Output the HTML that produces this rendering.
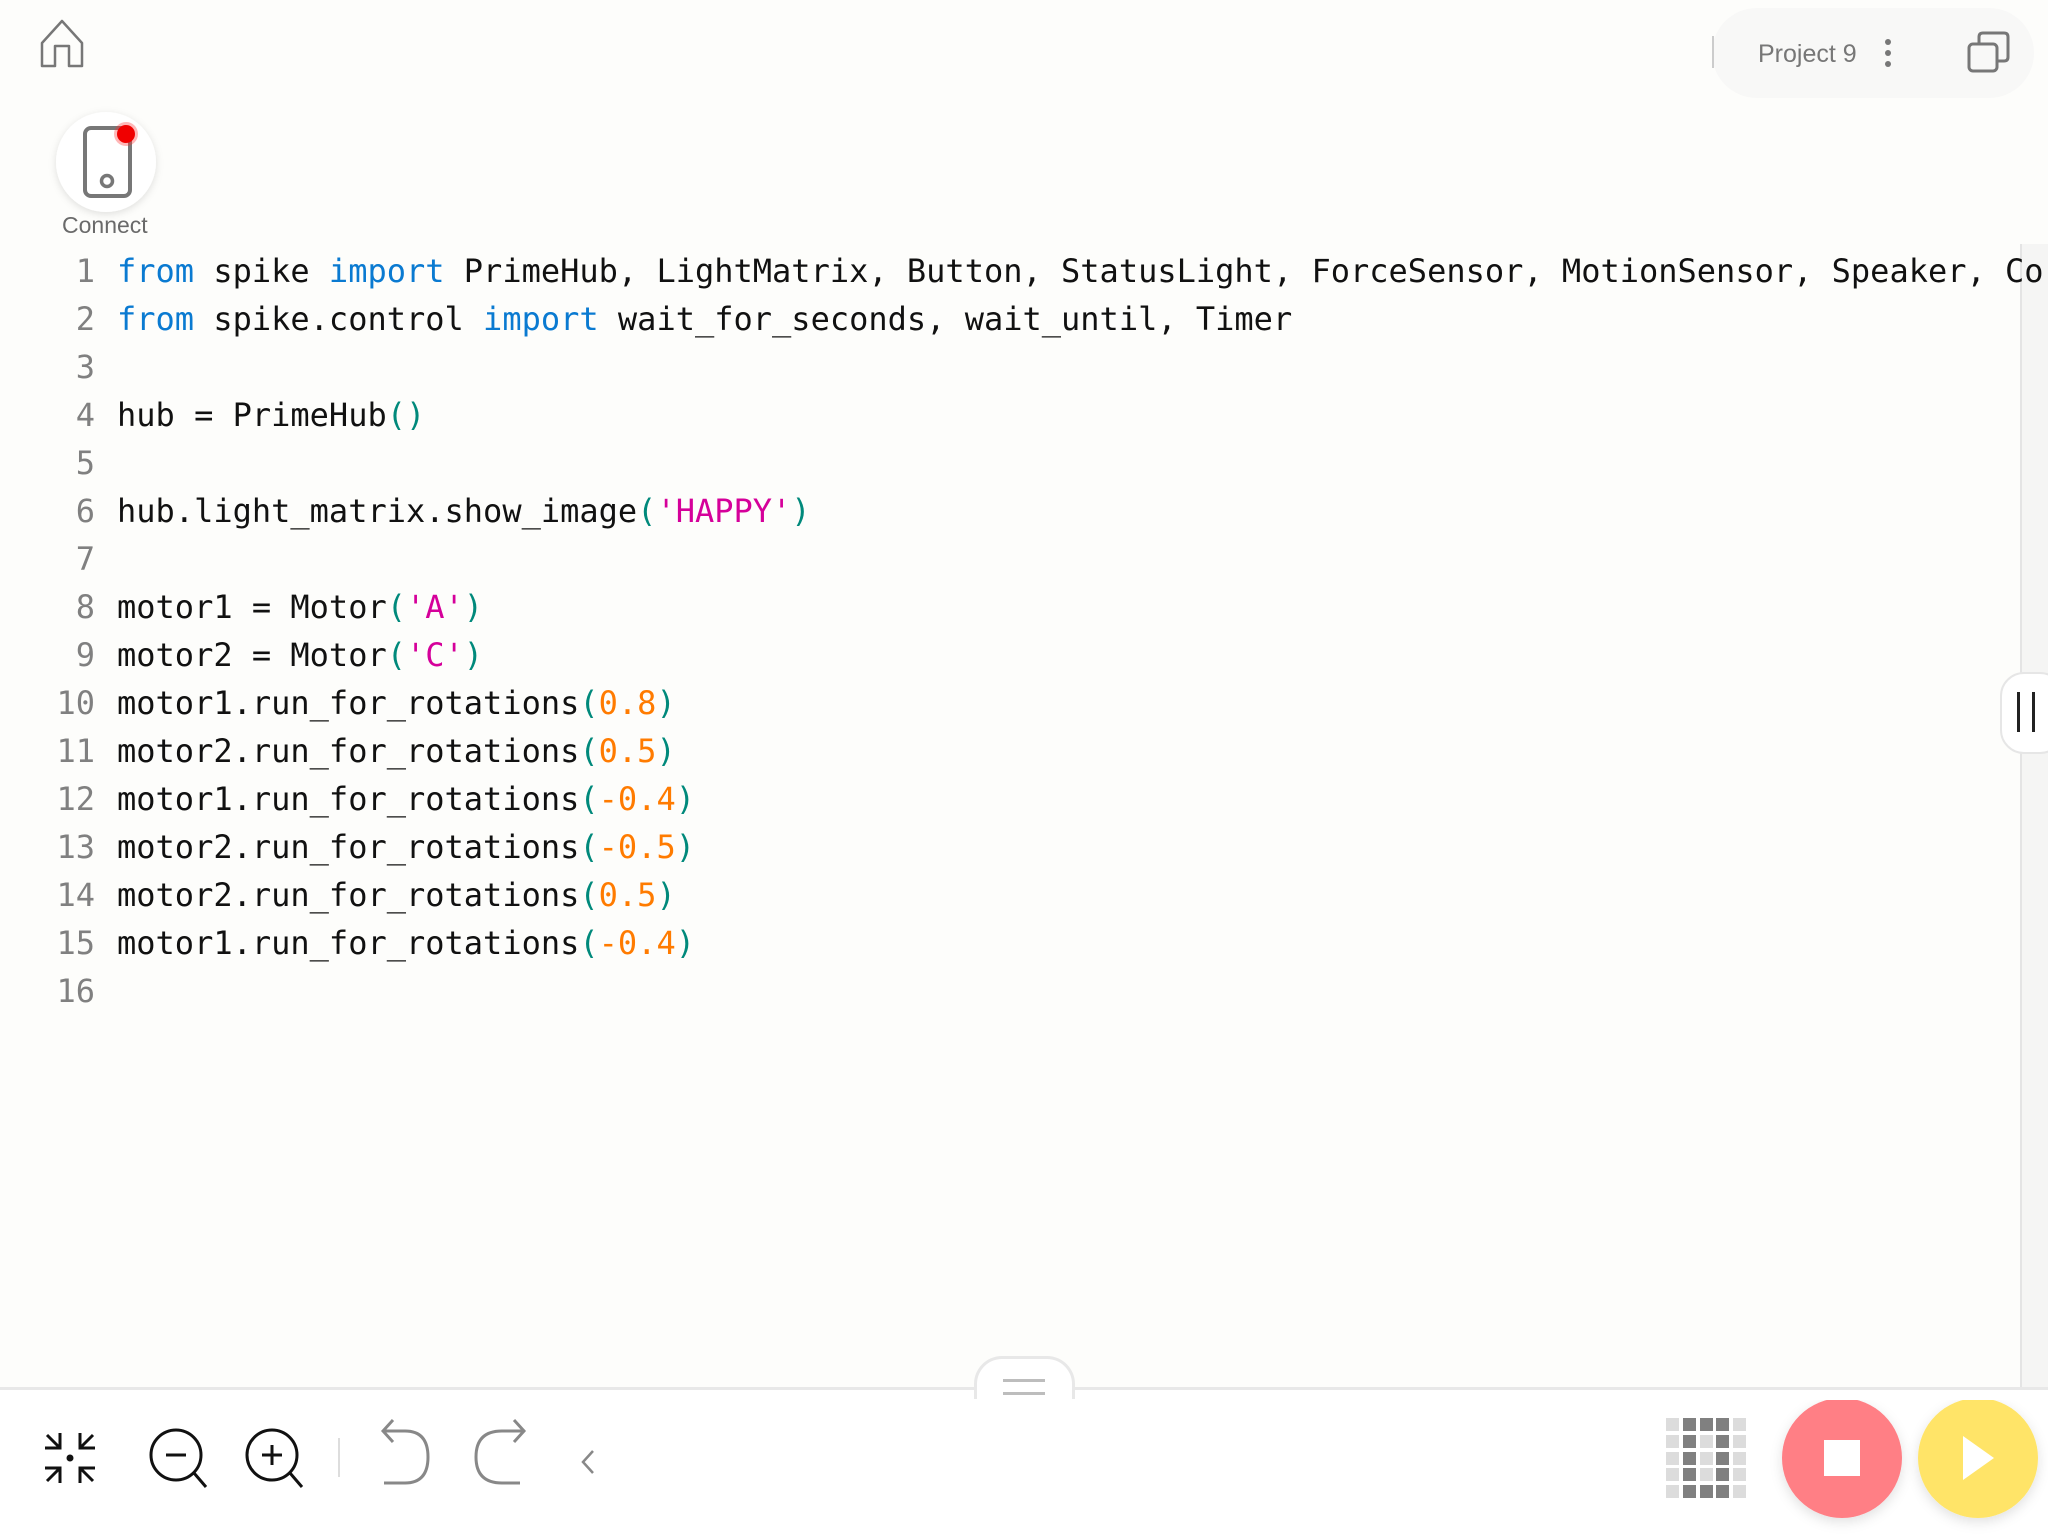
<!DOCTYPE html>
<html><head><meta charset="utf-8"><style>
html,body{margin:0;padding:0}
body{width:2048px;height:1536px;position:relative;overflow:hidden;background:#fdfdfb;font-family:"Liberation Sans",sans-serif}
.rp{position:absolute;left:2020px;top:244px;width:28px;height:1145px;background:#f5f5f4;border-left:2px solid #e4e4e4}
.code{position:absolute;left:0;top:247px;font-family:"DejaVu Sans Mono","Liberation Mono",monospace;font-size:32px;line-height:48px;white-space:pre;color:#111}
.ln{display:inline-block;width:95px;text-align:right;color:#808080;margin-right:22px}
.k{color:#0a7ad1}.s{color:#d5009a}.p{color:#00897b}.n{color:#ff7b00}
.bottom{position:absolute;left:0;top:1387px;width:2048px;height:149px;background:#fff;border-top:3px solid #e8e8e8}
</style></head><body>
<div class="rp"></div>
<div style="position:absolute;left:2000px;top:672px;width:60px;height:78px;background:#fff;border:2px solid #e6e6e6;border-radius:24px"></div>
<div style="position:absolute;left:2017px;top:692px;width:3px;height:40px;background:#222"></div>
<div style="position:absolute;left:2032px;top:692px;width:3px;height:40px;background:#222"></div>

<svg style="position:absolute;left:0;top:0" width="2048" height="300">
<path d="M42 66 V43 L62 21 L82 43 V66 H69 V46 H55 V66 Z" fill="none" stroke="#777" stroke-width="2.5" stroke-linejoin="round"/>
<defs><filter id="sh" x="-30%" y="-30%" width="160%" height="160%"><feDropShadow dx="0" dy="2" stdDeviation="4" flood-color="#000" flood-opacity="0.12"/></filter></defs>
<circle cx="106" cy="162" r="50" fill="#fff" filter="url(#sh)"/>
<rect x="85" y="128" width="45" height="68" rx="6" fill="none" stroke="#777" stroke-width="4"/>
<circle cx="107" cy="181" r="5.5" fill="none" stroke="#777" stroke-width="3.5"/>
<circle cx="126" cy="134" r="12" fill="#ff3030" opacity="0.35"/>
<circle cx="126" cy="134" r="9" fill="#f00000"/>
<rect x="1712" y="8" width="322" height="90" rx="45" fill="#f8f8f7"/>
<line x1="1713" y1="36" x2="1713" y2="68" stroke="#ccc" stroke-width="2"/>
<circle cx="1888" cy="42" r="3" fill="#777"/><circle cx="1888" cy="53" r="3" fill="#777"/><circle cx="1888" cy="64" r="3" fill="#777"/>
<rect x="1969" y="44" width="28" height="27" rx="4" fill="none" stroke="#777" stroke-width="3"/>
<path d="M1979 44 V37 Q1979 33 1983 33 H2004 Q2008 33 2008 37 V57 Q2008 61 2004 61 H1997" fill="none" stroke="#777" stroke-width="3"/>
</svg>
<div style="position:absolute;left:1758px;top:40px;font-size:25px;color:#777">Project 9</div>
<div style="position:absolute;left:62px;top:212px;font-size:23px;color:#6a6a6a">Connect</div>

<div class="code"><span class="ln">1</span><span class="k">from</span> spike <span class="k">import</span> PrimeHub, LightMatrix, Button, StatusLight, ForceSensor, MotionSensor, Speaker, Co
<span class="ln">2</span><span class="k">from</span> spike.control <span class="k">import</span> wait_for_seconds, wait_until, Timer
<span class="ln">3</span>
<span class="ln">4</span>hub = PrimeHub<span class="p">()</span>
<span class="ln">5</span>
<span class="ln">6</span>hub.light_matrix.show_image<span class="p">(</span><span class="s">'HAPPY'</span><span class="p">)</span>
<span class="ln">7</span>
<span class="ln">8</span>motor1 = Motor<span class="p">(</span><span class="s">'A'</span><span class="p">)</span>
<span class="ln">9</span>motor2 = Motor<span class="p">(</span><span class="s">'C'</span><span class="p">)</span>
<span class="ln">10</span>motor1.run_for_rotations<span class="p">(</span><span class="n">0.8</span><span class="p">)</span>
<span class="ln">11</span>motor2.run_for_rotations<span class="p">(</span><span class="n">0.5</span><span class="p">)</span>
<span class="ln">12</span>motor1.run_for_rotations<span class="p">(</span><span class="n">-0.4</span><span class="p">)</span>
<span class="ln">13</span>motor2.run_for_rotations<span class="p">(</span><span class="n">-0.5</span><span class="p">)</span>
<span class="ln">14</span>motor2.run_for_rotations<span class="p">(</span><span class="n">0.5</span><span class="p">)</span>
<span class="ln">15</span>motor1.run_for_rotations<span class="p">(</span><span class="n">-0.4</span><span class="p">)</span>
<span class="ln">16</span></div>

<div class="bottom"></div>
<div style="position:absolute;left:974px;top:1356px;width:95px;height:40px;background:#fff;border:3px solid #e8e8e8;border-bottom:none;border-radius:28px 28px 0 0"></div>
<div style="position:absolute;left:1003px;top:1379px;width:42px;height:3px;background:#bdbdbd"></div>
<div style="position:absolute;left:1003px;top:1392px;width:42px;height:3px;background:#bdbdbd"></div>

<svg style="position:absolute;left:0;top:1400px" width="2048" height="136">
<g stroke="#111" stroke-width="3" fill="none">
<path d="M45 48 H60 V33 M47 35 L60 48"/>
<path d="M95 48 H80 V33 M93 35 L80 48"/>
<path d="M45 68 H60 V83 M47 81 L60 68"/>
<path d="M95 68 H80 V83 M93 81 L80 68"/>
<ellipse cx="176" cy="55" rx="25" ry="25"/>
<path d="M194 73 L206 87 M166 55 H186"/>
<ellipse cx="272" cy="55" rx="25" ry="25"/>
<path d="M290 73 L302 87 M262 55 H282 M272 45 V65"/>
</g>
<circle cx="70" cy="58" r="3.5" fill="#111"/>
<line x1="339" y1="38" x2="339" y2="77" stroke="#ddd" stroke-width="2"/>
<g stroke="#888" stroke-width="3" fill="none">
<path d="M393 20 L383 31 L393 42 M383 31 H405 Q428 31 428 57 Q428 83 405 83 H384"/>
<path d="M514 20 L524 31 L514 42 M524 31 H502 Q476 31 476 57 Q476 83 502 83 H520"/>
<path d="M593 51 L583 62 L593 73" stroke-width="2.5"/>
</g>
<g>
<rect x="1666" y="18" width="13" height="13" fill="#dcdcdc"/><rect x="1683" y="18" width="13" height="13" fill="#808080"/><rect x="1700" y="18" width="13" height="13" fill="#808080"/><rect x="1716" y="18" width="13" height="13" fill="#808080"/><rect x="1733" y="18" width="13" height="13" fill="#dcdcdc"/>
<rect x="1666" y="35" width="13" height="13" fill="#dcdcdc"/><rect x="1683" y="35" width="13" height="13" fill="#808080"/><rect x="1700" y="35" width="13" height="13" fill="#dcdcdc"/><rect x="1716" y="35" width="13" height="13" fill="#808080"/><rect x="1733" y="35" width="13" height="13" fill="#dcdcdc"/>
<rect x="1666" y="52" width="13" height="13" fill="#dcdcdc"/><rect x="1683" y="52" width="13" height="13" fill="#808080"/><rect x="1700" y="52" width="13" height="13" fill="#dcdcdc"/><rect x="1716" y="52" width="13" height="13" fill="#808080"/><rect x="1733" y="52" width="13" height="13" fill="#dcdcdc"/>
<rect x="1666" y="68" width="13" height="13" fill="#dcdcdc"/><rect x="1683" y="68" width="13" height="13" fill="#808080"/><rect x="1700" y="68" width="13" height="13" fill="#dcdcdc"/><rect x="1716" y="68" width="13" height="13" fill="#808080"/><rect x="1733" y="68" width="13" height="13" fill="#dcdcdc"/>
<rect x="1666" y="85" width="13" height="13" fill="#dcdcdc"/><rect x="1683" y="85" width="13" height="13" fill="#808080"/><rect x="1700" y="85" width="13" height="13" fill="#808080"/><rect x="1716" y="85" width="13" height="13" fill="#808080"/><rect x="1733" y="85" width="13" height="13" fill="#dcdcdc"/>
</g>
<defs><filter id="sh2" x="-30%" y="-30%" width="160%" height="160%"><feDropShadow dx="0" dy="4" stdDeviation="6" flood-color="#000" flood-opacity="0.12"/></filter></defs>
<circle cx="1842" cy="58" r="60" fill="#ff7f85" filter="url(#sh2)"/>
<rect x="1824" y="40" width="36" height="36" fill="#fff"/>
<circle cx="1978" cy="58" r="60" fill="#ffe468" filter="url(#sh2)"/>
<path d="M1963 36 L1994 58 L1963 80 Z" fill="#fff"/>
</svg>
</body></html>
